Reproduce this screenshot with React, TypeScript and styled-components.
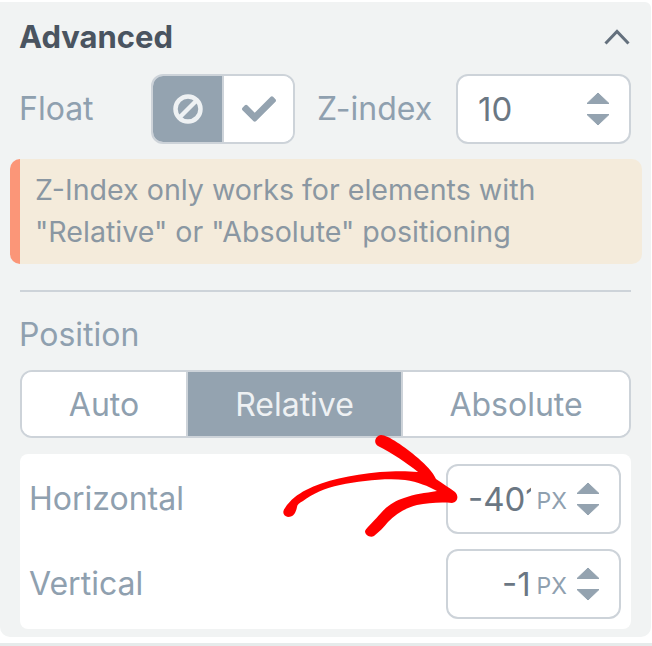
import React from "react";
import styled, { createGlobalStyle } from "styled-components";
import { FaCheck } from "react-icons/fa";

const GlobalStyle = createGlobalStyle`
  html, body {
    margin: 0;
    padding: 0;
    background: #ffffff;
  }
`;

const Page = styled.div`
  position: relative;
  width: 652px;
  height: 646px;
  box-sizing: border-box;
  padding-top: 2px;
  overflow: hidden;
  background: #ffffff;
  font-family: Inter, "Liberation Sans", sans-serif;
  border-bottom: 3px solid #e6ebeb;
`;

const Panel = styled.div`
  width: 651px;
  height: 635px;
  box-sizing: border-box;
  padding: 18px 21px 0 20px;
  background: #f1f3f3;
  border-radius: 0 6px 10px 10px;
`;

const Header = styled.div`
  display: flex;
  justify-content: space-between;
  align-items: center;
  height: 34px;
  margin-bottom: 20px;
`;

const Title = styled.h2`
  margin: 0 0 0 -1px;
  font-size: 31px;
  font-weight: 700;
  line-height: 34px;
  color: #4a5460;
`;

const Chevron = styled.svg`
  width: 26px;
  height: 16px;
  fill: none;
  stroke: #64707d;
  stroke-width: 3;
`;

const FloatRow = styled.div`
  display: flex;
  align-items: center;
  height: 70px;
`;

const Label = styled.span`
  margin-left: -1px;
  font-size: 32px;
  line-height: 36px;
  white-space: nowrap;
  color: #8fa0af;
`;

const FloatLabel = styled(Label)`
  flex: none;
  width: 132px;
`;

const ZLabel = styled(Label)`
  flex: none;
  width: 115px;
  margin: 0 24px 0 22px;
`;

const Toggle = styled.div`
  display: flex;
  flex: none;
  width: 144px;
  height: 70px;
  box-sizing: border-box;
  overflow: hidden;
  background: #ffffff;
  border: 2px solid #cdd3d9;
  border-radius: 12px;
`;

const ToggleCell = styled.div<{ $active?: boolean }>`
  display: flex;
  flex: 1;
  align-items: center;
  justify-content: center;
  font-size: 34px;
  color: ${(p) => (p.$active ? "#eef1f3" : "#94a3b0")};
  background: ${(p) => (p.$active ? "#94a3b0" : "#ffffff")};
  border-right: ${(p) => (p.$active ? "2px solid #cdd3d9" : "none")};
`;

const BanIcon = styled.svg`
  width: 32px;
  height: 32px;
  fill: none;
  stroke: #eef1f3;
  stroke-width: 4.5;
`;

const NumberBox = styled.div`
  display: flex;
  flex: none;
  align-items: center;
  width: 175px;
  height: 70px;
  box-sizing: border-box;
  background: #ffffff;
  border: 2px solid #cdd3d9;
  border-radius: 12px;
  padding: 0 19px 0 20px;
`;

const Value = styled.span`
  flex: 1;
  min-width: 0;
  overflow: hidden;
  white-space: nowrap;
  font-size: 33px;
  line-height: 42px;
  color: #6b7783;
`;

const RightValue = styled(Value)`
  text-align: right;
`;

const Unit = styled.span`
  margin: 3px 9px 0 6px;
  font-size: 23px;
  line-height: 30px;
  color: #8fa0af;
`;

const Spinner = styled.svg`
  flex: none;
  width: 24px;
  height: 34px;
  fill: #94a3b0;
  stroke: #94a3b0;
  stroke-width: 1;
  stroke-linejoin: round;
`;

const Notice = styled.div`
  box-sizing: border-box;
  width: 632px;
  height: 105px;
  margin: 15px 0 26px -10px;
  padding: 10px 10px 0 15px;
  background: #f4ebdb;
  border-left: 10px solid #fb9678;
  border-radius: 10px;
  font-size: 28.6px;
  line-height: 42px;
  white-space: nowrap;
  color: #8a97a2;
`;

const Divider = styled.hr`
  width: 611px;
  height: 2px;
  margin: 0 0 25px;
  border: 0;
  background: #cdd3d9;
`;

const PositionLabel = styled(Label)`
  display: block;
  margin-bottom: 17px;
`;

const Segments = styled.div`
  display: grid;
  grid-template-columns: 164px 217px 1fr;
  width: 611px;
  height: 68px;
  box-sizing: border-box;
  overflow: hidden;
  background: #ffffff;
  border: 2px solid #cdd3d9;
  border-radius: 12px;
`;

const Segment = styled.div<{ $active?: boolean }>`
  display: flex;
  align-items: center;
  justify-content: center;
  font-size: 32px;
  color: ${(p) => (p.$active ? "#eef1f3" : "#8fa0af")};
  background: ${(p) => (p.$active ? "#94a3b0" : "#ffffff")};
  border-left: ${(p) => (p.$active ? "2px solid #cdd3d9" : "none")};
  border-right: ${(p) => (p.$active ? "2px solid #cdd3d9" : "none")};
`;

const OffsetCard = styled.div`
  display: flex;
  flex-direction: column;
  gap: 15px;
  width: 611px;
  box-sizing: border-box;
  margin-top: 16px;
  padding: 10px;
  background: #ffffff;
  border-radius: 8px;
`;

const OffsetRow = styled.div`
  display: flex;
  align-items: center;
  justify-content: space-between;
`;

const ArrowMark = styled.svg`
  position: absolute;
  left: 0;
  top: 0;
  width: 652px;
  height: 646px;
  fill: #ff0000;
  pointer-events: none;
`;

const Arrows = () => (
  <Spinner viewBox="0 0 24 34">
    <path d="M12 1 L23 11.5 H1 Z" />
    <path d="M1 22.5 H23 L12 33 Z" />
  </Spinner>
);

const OffsetInput = ({ value }: { value: string }) => (
  <NumberBox>
    <RightValue>{value}</RightValue>
    <Unit>PX</Unit>
    <Arrows />
  </NumberBox>
);

export default function App() {
  return (
    <Page>
      <GlobalStyle />
      <Panel>
        <Header>
          <Title>Advanced</Title>
          <Chevron viewBox="0 0 26 16">
            <path d="M1.5 14.5 L13 2.5 L24.5 14.5" />
          </Chevron>
        </Header>
        <FloatRow>
          <FloatLabel>Float</FloatLabel>
          <Toggle>
            <ToggleCell $active>
              <BanIcon viewBox="0 0 32 32">
                <circle cx="16" cy="16" r="12.5" />
                <path d="M7 25 L25 7" />
              </BanIcon>
            </ToggleCell>
            <ToggleCell>
              <FaCheck />
            </ToggleCell>
          </Toggle>
          <ZLabel>Z-index</ZLabel>
          <NumberBox>
            <Value>10</Value>
            <Arrows />
          </NumberBox>
        </FloatRow>
        <Notice>
          Z-Index only works for elements with
          <br />
          "Relative" or "Absolute" positioning
        </Notice>
        <Divider />
        <PositionLabel>Position</PositionLabel>
        <Segments>
          <Segment>Auto</Segment>
          <Segment $active>Relative</Segment>
          <Segment>Absolute</Segment>
        </Segments>
        <OffsetCard>
          <OffsetRow>
            <Label>Horizontal</Label>
            <OffsetInput value="-401" />
          </OffsetRow>
          <OffsetRow>
            <Label>Vertical</Label>
            <OffsetInput value="-1" />
          </OffsetRow>
        </OffsetCard>
      </Panel>
      <ArrowMark viewBox="0 0 652 646">
        <path d="M288 517 C283 516 282 512 285 508 C290 500 298 494 306 490 C325 480 350 475 380 472 C395 471 407 471 418 472 C407 463 392 453 378 446 C373 443 375 436 381 435 C388 435 405 447 418 458 C426 465 433 472 436 479 C443 484 450 488 455 492 C459 496 458 502 452 503 C440 502 428 503 417 505 C405 508 396 514 388 522 C384 527 379 532 374 536 C370 538 365 535 365 531 C367 527 375 520 381 513 C388 505 395 501 404 498 C414 494 425 493 437 491 C428 486 418 482 405 480 C385 478 360 481 340 485 C325 488 312 494 303 501 C299 503 297 505 297 507 C296 512 294 517 288 517 Z" />
      </ArrowMark>
    </Page>
  );
}
